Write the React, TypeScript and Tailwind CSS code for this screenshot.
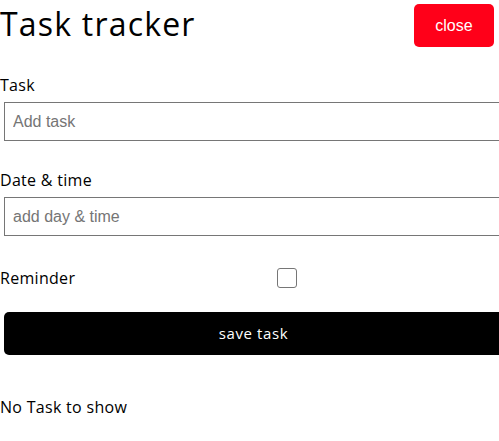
import { useState } from "react"

export default function App() {
  const [reminder, setReminder] = useState(false)

  return (
    <div className="w-[499px] overflow-hidden bg-white text-black font-['Open_Sans',sans-serif] tracking-[0.3px]">
      <header className="flex items-start justify-between">
        <h1 className="text-[32px] leading-[48px] font-normal tracking-[1.2px]">Task tracker</h1>
        <button className="mt-1 mr-[5px] h-[43px] w-20 rounded-[5px] bg-[#ff0019] text-base tracking-normal text-white font-['Liberation_Sans',Arial,sans-serif]">
          close
        </button>
      </header>

      <form className="flex flex-col" onSubmit={(e) => e.preventDefault()}>
        <label className="mt-[25px] text-base leading-6">Task</label>
        <input
          className="ml-1 mt-[5px] h-[39px] w-full border border-[#767676] px-2 text-base tracking-normal font-['Liberation_Sans',Arial,sans-serif] placeholder:text-[#757575] outline-none"
          placeholder="Add task"
        />

        <label className="mt-[27px] text-base leading-6">Date &amp; time</label>
        <input
          className="ml-1 mt-[5px] h-[39px] w-full border border-[#767676] px-2 text-base tracking-normal font-['Liberation_Sans',Arial,sans-serif] placeholder:text-[#757575] outline-none"
          placeholder="add day &amp; time"
        />

        <div className="mt-[30px] flex h-6 items-center">
          <label className="w-[277px] text-base leading-6">Reminder</label>
          <input
            type="checkbox"
            checked={reminder}
            onChange={(e) => setReminder(e.target.checked)}
            className="h-5 w-5 appearance-none rounded-[3px] border border-[#767676] bg-white"
          />
        </div>

        <button className="ml-1 mt-[22px] h-[43px] w-full rounded-[5px] bg-black text-[15px] tracking-[0.6px] text-white">
          save task
        </button>
      </form>

      <p className="mt-[40px] pb-6 text-base leading-6">No Task to show</p>
    </div>
  )
}
